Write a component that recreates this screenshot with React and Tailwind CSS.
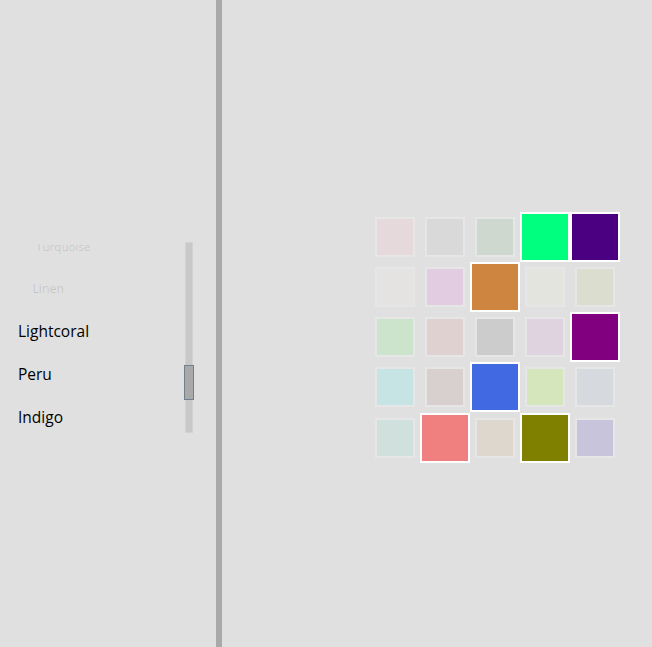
import React from "react";

const colors = [
  ["pink", false], ["silver", false], ["darkseagreen", false], ["springgreen", true], ["indigo", true],
  ["linen", false], ["violet", false], ["peru", true], ["beige", false], ["#ccdb90", false],
  ["#7cf47c", false], ["#e09a9a", false], ["gray", false], ["plum", false], ["purple", true],
  ["#68f4f4", false], ["rosybrown", false], ["royalblue", true], ["greenyellow", false], ["lightsteelblue", false],
  ["#90e0d6", false], ["lightcoral", true], ["tan", false], ["olive", true], ["slateblue", false],
];

const items = [
  { name: "Turquoise", faded: true, scale: "scale-[0.75] translate-y-[0.5px]" },
  { name: "Linen", faded: true, scale: "scale-[0.8] translate-y-[-1px]" },
  { name: "Lightcoral" },
  { name: "Peru" },
  { name: "Indigo" },
];

export default function App() {
  return (
    <div
      className="flex w-[652px] h-[647px] bg-[#e0e0e0] overflow-hidden"
      style={{ fontFamily: '"Open Sans", "Noto Sans", sans-serif' }}
    >
      <div className="w-[216px] shrink-0 flex items-center pt-[27px]">
        <div className="flex w-full">
          <div className="relative w-[180px] mt-[2.5px] h-[189.5px] overflow-hidden">
            <div className="mt-[-19px] flex flex-col">
              {items.map((it) => (
                <div
                  key={it.name}
                  className={
                    "h-[43px] flex items-center pl-[18px] text-[15.5px] origin-[90px_50%] " +
                    (it.faded ? "text-black/[0.13] " + it.scale : "text-black")
                  }
                >
                  {it.name}
                </div>
              ))}
            </div>
          </div>
          <div className="relative ml-[5px] mt-[1px] w-[8px] h-[191px] bg-[#c8c8c8] border border-[#d2d2d2]">
            <div className="absolute left-[-2px] top-[122px] w-[10px] h-[35px] bg-[#a9a9a9] border border-[#708090]" />
          </div>
        </div>
      </div>
      <div className="w-[6px] shrink-0 bg-[#a9a9a9]" />
      <div className="flex-1 flex items-center pt-[27px] pl-[148px]">
        <div className="grid grid-cols-5 w-[250px]">
          {colors.map(([c, sel], i) => (
            <div key={i} className="w-[50px] h-[50.25px] flex items-center justify-center">
              {sel ? (
                <div className="w-[50px] h-[50px] border-2 border-white" style={{ backgroundColor: c }} />
              ) : (
                <div className="w-[40px] h-[40px] border-2 border-white opacity-20" style={{ backgroundColor: c }} />
              )}
            </div>
          ))}
        </div>
      </div>
    </div>
  );
}
